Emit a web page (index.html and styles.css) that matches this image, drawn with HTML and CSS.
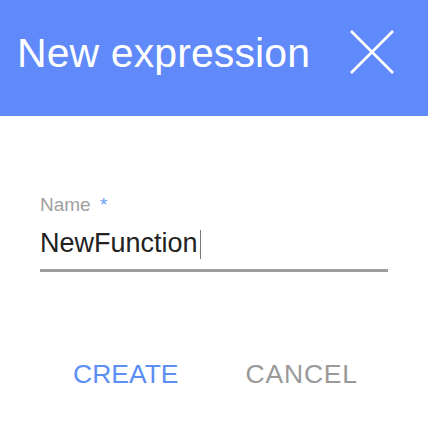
FILE: index.html
```html
<!DOCTYPE html>
<html lang="en">
<head>
<meta charset="utf-8">
<title>New expression</title>
<link rel="stylesheet" href="styles.css">
</head>
<body>
<div class="dialog">
  <header class="dialog-header">
    <h1 class="dialog-title">New expression</h1>
    <button class="close-btn" aria-label="Close">
      <svg width="44" height="44" viewBox="0 0 44 44" aria-hidden="true">
        <line x1="1" y1="1" x2="43" y2="43" stroke="#fff" stroke-width="2.6"/>
        <line x1="43" y1="1" x2="1" y2="43" stroke="#fff" stroke-width="2.6"/>
      </svg>
    </button>
  </header>
  <main class="dialog-body">
    <div class="field">
      <label class="field-label">Name <span class="required">*</span></label>
      <div class="field-value">NewFunction<span class="caret"></span></div>
    </div>
    <div class="actions">
      <button class="action action-primary">CREATE</button>
      <button class="action action-secondary">CANCEL</button>
    </div>
  </main>
</div>
</body>
</html>
```

FILE: styles.css
```css
html, body {
  margin: 0;
  padding: 0;
  background: #ffffff;
}

body {
  font-family: "Liberation Sans", Arial, Helvetica, sans-serif;
}

.dialog {
  width: 428px;
}

.dialog-header {
  box-sizing: border-box;
  height: 116px;
  background: #608afa;
  display: flex;
  justify-content: space-between;
  align-items: flex-start;
  padding: 30px 34px 0 17px;
}

.dialog-title {
  margin: 0;
  font-size: 41px;
  line-height: 47px;
  font-weight: normal;
  color: #ffffff;
  letter-spacing: 0.1px;
}

.close-btn {
  margin: 0;
  padding: 0;
  border: 0;
  background: none;
  width: 44px;
  height: 44px;
  display: block;
}

.close-btn svg {
  display: block;
}

.dialog-body {
  padding: 78px 40px 0 40px;
}

.field {
  display: flex;
  flex-direction: column;
  gap: 11px;
}

.field-label {
  font-size: 19px;
  line-height: 22px;
  color: #a0a0a0;
}

.required {
  color: #6c9ef6;
  margin-left: 4px;
}

.field-value {
  font-size: 27px;
  line-height: 32px;
  color: #222222;
  padding-bottom: 10px;
  border-bottom: 3px solid #9e9e9e;
}

.caret {
  display: inline-block;
  width: 1px;
  height: 29px;
  background: #777777;
  margin-left: 2px;
  vertical-align: -7px;
}

.actions {
  display: flex;
  gap: 67px;
  padding: 87px 0 0 33px;
}

.action {
  margin: 0;
  padding: 0;
  border: 0;
  background: none;
  font-family: inherit;
  font-size: 26.5px;
  line-height: 30px;
}

.action-primary {
  color: #5b8ff3;
}

.action-secondary {
  color: #9a9a9a;
  letter-spacing: 0.8px;
}
```
